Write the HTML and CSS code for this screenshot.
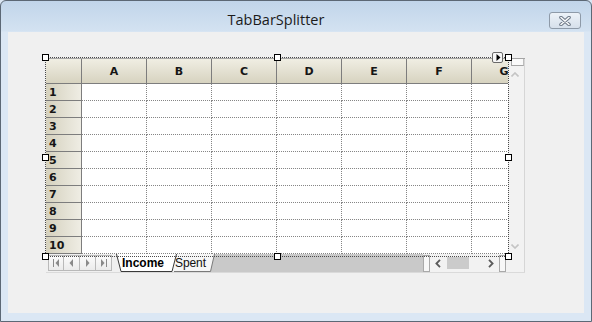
FILE: index.html
```html
<!DOCTYPE html>
<html>
<head>
<meta charset="utf-8">
<link rel="stylesheet" href="styles.css">
</head>
<body>
<div class="window">
  <div class="titlebar">
    <div class="title">TabBarSplitter</div>
    <div class="close">
      <svg width="12" height="10" viewBox="0 0 12 10">
        <path d="M2 1.5 L10 8.5 M10 1.5 L2 8.5" stroke="#6d7886" stroke-width="3.6" stroke-linecap="round"/>
        <path d="M2 1.5 L10 8.5 M10 1.5 L2 8.5" stroke="#fbfcfd" stroke-width="1.6" stroke-linecap="round"/>
      </svg>
    </div>
  </div>
  <div class="client">
    <div class="control">
      <div class="sheet">
        <div class="hdr corner"></div>
        <div class="hdr col">A</div><div class="hdr col">B</div><div class="hdr col">C</div><div class="hdr col">D</div><div class="hdr col">E</div><div class="hdr col">F</div><div class="hdr col">G</div>
        <div class="rh">1</div><div class="cell"></div><div class="cell"></div><div class="cell"></div><div class="cell"></div><div class="cell"></div><div class="cell"></div><div class="cell"></div>
        <div class="rh">2</div><div class="cell"></div><div class="cell"></div><div class="cell"></div><div class="cell"></div><div class="cell"></div><div class="cell"></div><div class="cell"></div>
        <div class="rh">3</div><div class="cell"></div><div class="cell"></div><div class="cell"></div><div class="cell"></div><div class="cell"></div><div class="cell"></div><div class="cell"></div>
        <div class="rh">4</div><div class="cell"></div><div class="cell"></div><div class="cell"></div><div class="cell"></div><div class="cell"></div><div class="cell"></div><div class="cell"></div>
        <div class="rh">5</div><div class="cell"></div><div class="cell"></div><div class="cell"></div><div class="cell"></div><div class="cell"></div><div class="cell"></div><div class="cell"></div>
        <div class="rh">6</div><div class="cell"></div><div class="cell"></div><div class="cell"></div><div class="cell"></div><div class="cell"></div><div class="cell"></div><div class="cell"></div>
        <div class="rh">7</div><div class="cell"></div><div class="cell"></div><div class="cell"></div><div class="cell"></div><div class="cell"></div><div class="cell"></div><div class="cell"></div>
        <div class="rh">8</div><div class="cell"></div><div class="cell"></div><div class="cell"></div><div class="cell"></div><div class="cell"></div><div class="cell"></div><div class="cell"></div>
        <div class="rh">9</div><div class="cell"></div><div class="cell"></div><div class="cell"></div><div class="cell"></div><div class="cell"></div><div class="cell"></div><div class="cell"></div>
        <div class="rh">10</div><div class="cell"></div><div class="cell"></div><div class="cell"></div><div class="cell"></div><div class="cell"></div><div class="cell"></div><div class="cell"></div>
      </div>
      <div class="vscroll">
        <div class="vsplit"></div>
        <div class="varrow">
          <svg width="8" height="5" viewBox="0 0 8 5"><polyline points="0.5,4.5 4,1 7.5,4.5" fill="none" stroke="#c4c4c4" stroke-width="1.6"/></svg>
        </div>
        <div class="vtrack"></div>
        <div class="varrow">
          <svg width="8" height="5" viewBox="0 0 8 5"><polyline points="0.5,0.5 4,4 7.5,0.5" fill="none" stroke="#c4c4c4" stroke-width="1.6"/></svg>
        </div>
      </div>
      <div class="tabbar">
        <div class="nav">
          <div class="navbtn"><svg width="7" height="8" viewBox="0 0 7 8"><rect x="0" y="0" width="1" height="8" fill="#8a8a8a"/><path d="M6 0 L2.5 4 L6 8Z" fill="#8a8a8a"/></svg></div>
          <div class="navbtn"><svg width="5" height="8" viewBox="0 0 5 8"><path d="M4 0 L0.5 4 L4 8Z" fill="#8a8a8a"/></svg></div>
          <div class="navbtn"><svg width="5" height="8" viewBox="0 0 5 8"><path d="M1 0 L4.5 4 L1 8Z" fill="#8a8a8a"/></svg></div>
          <div class="navbtn"><svg width="7" height="8" viewBox="0 0 7 8"><path d="M1 0 L4.5 4 L1 8Z" fill="#8a8a8a"/><rect x="6" y="0" width="1" height="8" fill="#8a8a8a"/></svg></div>
        </div>
        <div class="tabstrip">
          <svg class="tabshapes" width="311" height="18" viewBox="0 0 311 18">
            <rect x="98" y="0" width="213" height="18" fill="#c9c9c9"/>
            <polygon points="58,0 102.5,0 98.5,17.5 62,17.5" fill="#f6f6f6"/>
            <polyline points="102.5,0 98.5,17.5 62,17.5" fill="none" stroke="#7a7a7a" stroke-width="1"/>
            <polygon points="4.5,0 9,17.5 60,17.5 64.5,0" fill="#ffffff"/>
            <polyline points="4.5,0 9,17.5 60,17.5 64.5,0" fill="none" stroke="#3a3a3a" stroke-width="1"/>
          </svg>
          <span class="tab active">Income</span>
          <span class="tab">Spent</span>
        </div>
        <div class="hsplit"></div>
        <div class="hscroll">
          <svg class="harrow" width="6" height="9" viewBox="0 0 6 9"><polyline points="5,0.8 1.4,4.5 5,8.2" fill="none" stroke="#5a5a5a" stroke-width="1.8"/></svg>
          <div class="thumb"></div>
          <svg class="harrow right" width="6" height="9" viewBox="0 0 6 9"><polyline points="1,0.8 4.6,4.5 1,8.2" fill="none" stroke="#5a5a5a" stroke-width="1.8"/></svg>
          <div class="hend"></div>
        </div>
      </div>
      <div class="sizecorner"></div>
    </div>
    <div class="selection">
      <div class="handle h-tl"></div>
      <div class="handle h-tm"></div>
      <div class="handle h-tr"></div>
      <div class="handle h-ml"></div>
      <div class="handle h-mr"></div>
      <div class="handle h-bl"></div>
      <div class="handle h-bm"></div>
      <div class="handle h-br"></div>
      <div class="smarttag">
        <svg width="5" height="7" viewBox="0 0 5 7"><path d="M0.5 0 L4.5 3.5 L0.5 7Z" fill="#000"/></svg>
      </div>
    </div>
  </div>
</div>
</body>
</html>
```

FILE: styles.css
```css
html, body {
  margin: 0;
  padding: 0;
}
body {
  width: 592px;
  height: 322px;
  overflow: hidden;
  background: #dae6f3;
}
.window {
  box-sizing: border-box;
  width: 592px;
  height: 322px;
  border: 1px solid #5c6875;
  border-radius: 6px 6px 0 0;
  background: linear-gradient(#c1d5ea 0px, #d3e2f1 30px, #dbe7f4 31px, #dbe7f4 100%);
  display: flex;
  flex-direction: column;
}
.titlebar {
  height: 31px;
  flex: none;
  display: flex;
  align-items: flex-start;
}
.title {
  flex: 1;
  text-align: center;
  font-family: "Open Sans", "Noto Sans", sans-serif;
  font-size: 14.5px;
  line-height: 20px;
  padding-top: 9px;
  padding-left: 2px;
  color: #1b1b1b;
}
.close {
  box-sizing: border-box;
  width: 32px;
  height: 17px;
  margin-top: 11px;
  margin-right: 10px;
  border: 1px solid #8e9aa8;
  border-radius: 3px;
  background: linear-gradient(#edf2f8, #d6e0eb);
  display: flex;
  align-items: center;
  justify-content: center;
}
.close svg { display: block; }

.client {
  position: relative;
  flex: 1;
  margin: 0 7px 8px 7px;
  background: #f0f0f0;
  padding: 26px 0 0 38px;
}

.control {
  display: grid;
  grid-template-columns: 462px 17px;
  grid-template-rows: 195px 18px;
  width: 479px;
  border-top: 1px solid #a4a4a4;
  border-bottom: 1px solid #dadada;
  background: #f0f0f0;
}

.sheet {
  display: grid;
  grid-template-columns: 36px repeat(7, 65px);
  grid-template-rows: 25px repeat(10, 17px);
  overflow: hidden;
  background: #ffffff;
  font-family: "DejaVu Sans", sans-serif;
  font-weight: bold;
  font-size: 11px;
  color: #161616;
}
.hdr {
  box-sizing: border-box;
  background: linear-gradient(#f0eee3, #d7d3c0);
  border-right: 1px solid #7d7d7d;
  border-bottom: 1px solid #7d7d7d;
  display: flex;
  align-items: center;
  justify-content: center;
}
.rh {
  box-sizing: border-box;
  background: linear-gradient(to right, #d5d1be, #efede4);
  border-right: 1px solid #7d7d7d;
  border-bottom: 1px solid #7d7d7d;
  padding-left: 3px;
  display: flex;
  align-items: center;
}
.cell {
  box-sizing: border-box;
  border-right: 1px dotted #858585;
  border-bottom: 1px dotted #858585;
}

.vscroll {
  box-sizing: border-box;
  border-right: 1px solid #d6d6d6;
  background: #f2f2f2;
  display: flex;
  flex-direction: column;
  align-items: center;
}
.vsplit {
  box-sizing: border-box;
  align-self: stretch;
  height: 7px;
  margin-left: 3px;
  border: 1px solid #a6a6a6;
  border-top: none;
  border-right-color: #bdbdbd;
  background: #fafafa;
}
.varrow {
  height: 16px;
  display: flex;
  align-items: center;
  justify-content: center;
  margin-left: -2px;
}
.varrow svg { display: block; }
.vtrack { flex: 1; }

.tabbar {
  display: flex;
  height: 18px;
  background: #f0f0f0;
  font-family: "Liberation Sans", Arial, sans-serif;
  font-size: 12px;
}
.nav {
  display: flex;
  padding-left: 2px;
  padding-top: 1px;
}
.navbtn {
  box-sizing: border-box;
  width: 16px;
  height: 16px;
  border: 1px solid #b9b9b9;
  border-left: none;
  background: linear-gradient(#fbfbfb, #ebebeb);
  display: flex;
  align-items: center;
  justify-content: center;
}
.navbtn:first-child { border-left: 1px solid #b9b9b9; }
.navbtn svg { display: block; }

.tabstrip {
  position: relative;
  width: 311px;
  display: flex;
  align-items: center;
}
.tabshapes {
  position: absolute;
  left: 0;
  top: 0;
  display: block;
}
.tab {
  position: relative;
  color: #101010;
  line-height: 16px;
}
.tab.active {
  font-weight: bold;
  width: 53px;
  padding-left: 10px;
  color: #000;
}
.tab:not(.active) {
  letter-spacing: -0.1px;
}

.hsplit {
  box-sizing: border-box;
  width: 7px;
  height: 17px;
  margin-top: 1px;
  border: 1px solid #a9a9a9;
  background: #f7f7f7;
}
.hscroll {
  width: 78px;
  display: flex;
  align-items: center;
  background: #f2f2f2;
}
.harrow { display: block; margin-left: 5px; }
.thumb {
  width: 22px;
  height: 12px;
  margin-left: 6px;
  background: #cbcbcb;
}
.harrow.right { margin-left: 19px; }
.hend {
  box-sizing: border-box;
  width: 7px;
  height: 17px;
  margin-top: 1px;
  margin-left: 5px;
  border: 1px solid #a9a9a9;
  background: #f7f7f7;
}
.sizecorner {
  box-sizing: border-box;
  border-right: 1px solid #d6d6d6;
  background: #f2f2f2;
}

.selection {
  position: absolute;
  left: 37px;
  top: 25px;
  box-sizing: border-box;
  width: 464px;
  height: 200px;
  border: 1px dotted #4a4a4a;
  pointer-events: none;
}
.handle {
  position: absolute;
  box-sizing: border-box;
  width: 7px;
  height: 7px;
  border: 1px solid #000;
  background: #fff;
}
.h-tl { left: -4px; top: -4px; }
.h-tm { left: 228px; top: -4px; }
.h-tr { left: 459px; top: -4px; }
.h-ml { left: -4px; top: 96px; }
.h-mr { left: 459px; top: 96px; }
.h-bl { left: -4px; top: 195px; }
.h-bm { left: 228px; top: 195px; }
.h-br { left: 459px; top: 195px; }
.smarttag {
  position: absolute;
  box-sizing: border-box;
  left: 446px;
  top: -6px;
  width: 11px;
  height: 11px;
  border: 1px solid #6a6a6a;
  border-radius: 2px;
  background: #f6f6f6;
  display: flex;
  align-items: center;
  justify-content: center;
}
.smarttag svg { display: block; margin-left: 1px; }
```
